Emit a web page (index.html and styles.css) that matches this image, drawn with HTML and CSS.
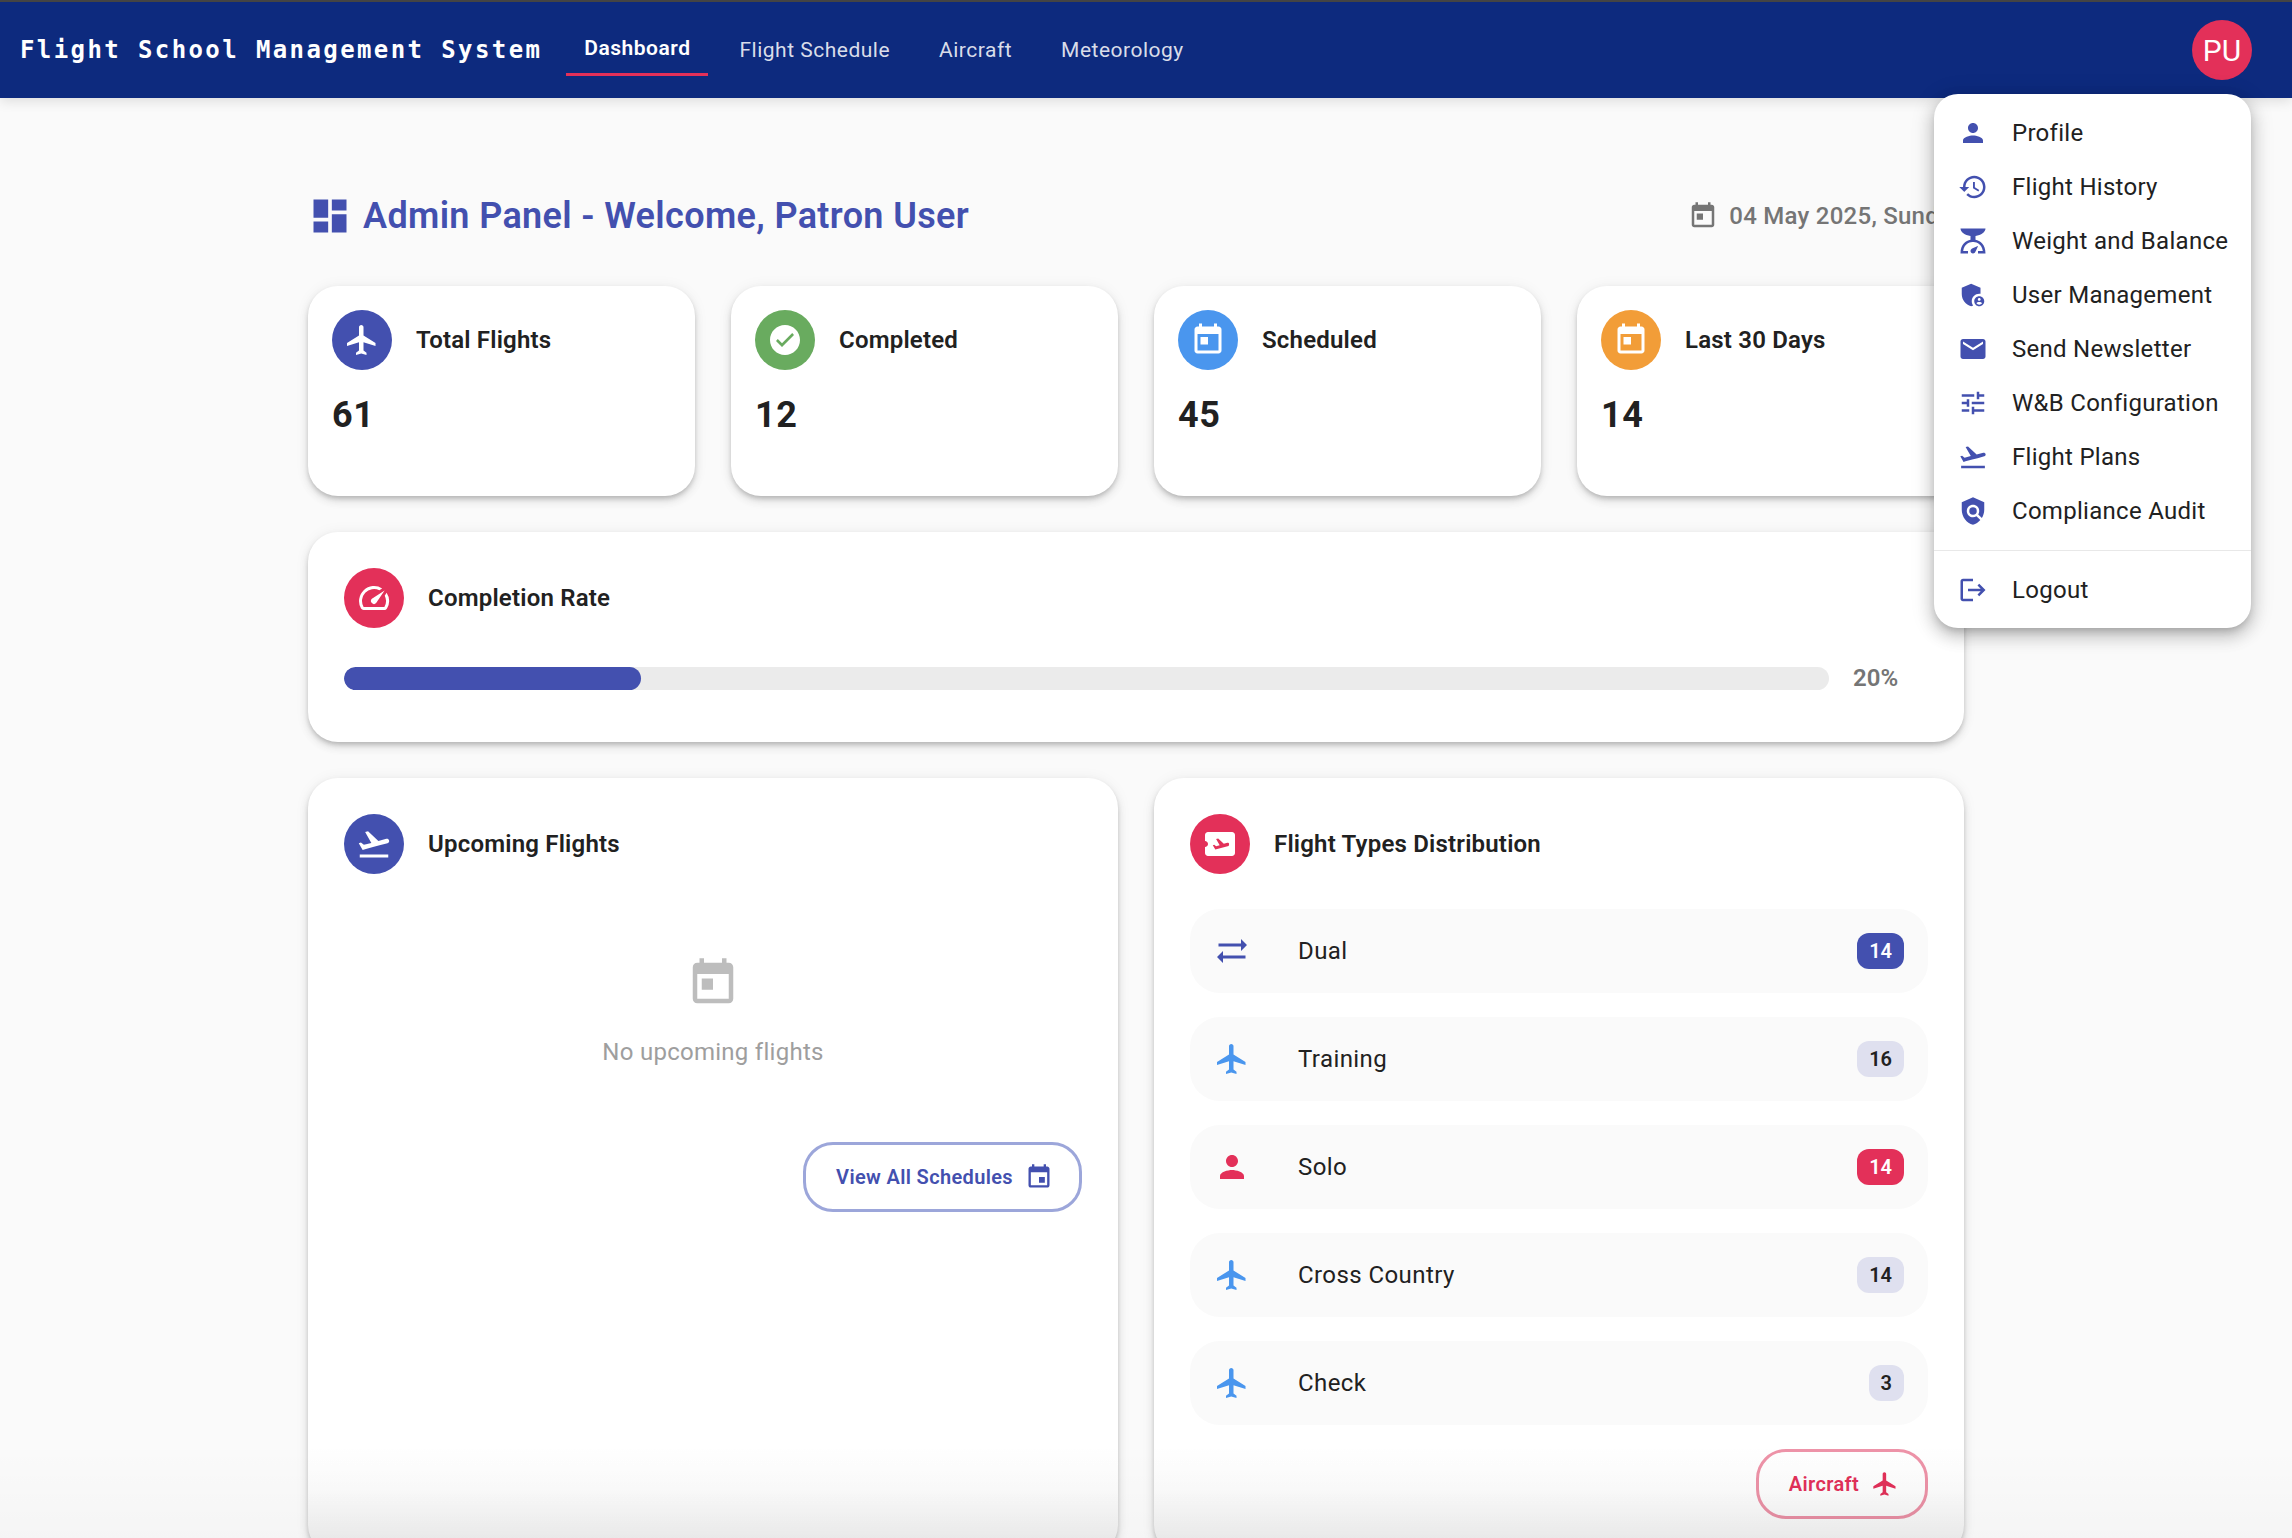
FILE: index.html
```html
<!DOCTYPE html>
<html lang="en">
<head>
<meta charset="utf-8">
<title>Flight School Management System</title>
<link rel="stylesheet" href="styles.css">
</head>
<body>
<svg class="defs" width="0" height="0" aria-hidden="true">
  <symbol id="i-person" viewBox="0 0 24 24"><path d="M12 12c2.21 0 4-1.79 4-4s-1.79-4-4-4-4 1.79-4 4 1.79 4 4 4zm0 2c-2.67 0-8 1.34-8 4v2h16v-2c0-2.66-5.33-4-8-4z"/></symbol>
  <symbol id="i-history" viewBox="0 0 24 24"><path d="M13 3c-4.97 0-9 4.03-9 9H1l3.89 3.89.07.14L9 12H6c0-3.87 3.13-7 7-7s7 3.13 7 7-3.13 7-7 7c-1.93 0-3.68-.79-4.94-2.06l-1.42 1.42C8.27 19.99 10.51 21 13 21c4.97 0 9-4.03 9-9s-4.03-9-9-9zm-1 5v5l4.28 2.54.72-1.21-3.5-2.08V8H12z"/></symbol>
  <symbol id="i-scale" viewBox="0 0 24 24"><path d="M14 11V8c4.56-.58 8-3.1 8-6H2c0 2.9 3.44 5.42 8 6v3c-3.68.73-8 3.61-8 11h6v-2H4.13c.93-6.83 6.65-7.2 7.87-7.2s6.94.37 7.87 7.2H16v2h6c0-7.39-4.32-10.27-8-11zm-2 11c-1.1 0-2-.9-2-2 0-.55.22-1.05.59-1.41C11.39 17.79 16 16 16 16s-1.79 4.61-2.59 5.41c-.36.37-.86.59-1.41.59z"/></symbol>
  <symbol id="i-admin" viewBox="0 0 24 24"><path d="M17 11c.34 0 .67.04 1 .09V6.27L10.5 3 3 6.27v4.91c0 4.54 3.2 8.79 7.5 9.82.55-.13 1.08-.32 1.6-.55-.69-.98-1.1-2.17-1.1-3.45 0-3.31 2.69-6 6-6z"/><path d="M17 13c-2.21 0-4 1.79-4 4s1.79 4 4 4 4-1.79 4-4-1.79-4-4-4zm0 1.38c.62 0 1.12.51 1.12 1.12s-.51 1.12-1.12 1.12-1.12-.51-1.12-1.12.5-1.12 1.12-1.12zm0 5.37c-.93 0-1.74-.46-2.24-1.17.05-.72 1.51-1.08 2.24-1.08s2.19.36 2.24 1.08c-.5.71-1.31 1.17-2.24 1.17z"/></symbol>
  <symbol id="i-email" viewBox="0 0 24 24"><path d="M20 4H4c-1.1 0-1.99.9-1.99 2L2 18c0 1.1.9 2 2 2h16c1.1 0 2-.9 2-2V6c0-1.1-.9-2-2-2zm0 4l-8 5-8-5V6l8 5 8-5v2z"/></symbol>
  <symbol id="i-tune" viewBox="0 0 24 24"><path d="M3 17v2h6v-2H3zM3 5v2h10V5H3zm10 16v-2h8v-2h-8v-2h-2v6h2zM7 9v2H3v2h4v2h2V9H7zm14 4v-2H11v2h10zm-6-4h2V7h4V5h-4V3h-2v6z"/></symbol>
  <symbol id="i-takeoff" viewBox="0 0 24 24"><path d="M2.5 19h19v2h-19zm19.57-9.36c-.21-.8-1.04-1.28-1.84-1.06L14.92 10l-6.9-6.43-1.93.51 4.14 7.17-4.97 1.33-1.97-1.54-1.45.39 1.82 3.16.77 1.33 1.6-.43 5.31-1.42 4.35-1.16L21 11.49c.81-.23 1.28-1.05 1.07-1.85z"/></symbol>
  <symbol id="i-policy" viewBox="0 0 24 24"><path d="M12 1 3 5v6c0 5.55 3.84 10.74 9 12 2.3-.56 4.33-1.9 5.88-3.71l-3.12-3.12c-1.94 1.29-4.58 1.07-6.29-.64-1.95-1.95-1.95-5.12 0-7.07 1.95-1.95 5.12-1.95 7.07 0 1.71 1.71 1.92 4.35.64 6.29l2.9 2.9C20.29 15.69 21 13.38 21 11V5l-9-4z"/><circle cx="12" cy="12" r="3"/></symbol>
  <symbol id="i-logout" viewBox="0 0 24 24"><path d="M17 7l-1.41 1.41L18.17 11H8v2h10.17l-2.58 2.58L17 17l5-5zM4 5h8V3H4c-1.1 0-2 .9-2 2v14c0 1.1.9 2 2 2h8v-2H4V5z"/></symbol>
  <symbol id="i-flight" viewBox="0 0 24 24"><path d="M21 16v-2l-8-5V3.5c0-.83-.67-1.5-1.5-1.5S10 2.67 10 3.5V9l-8 5v2l8-2.5V19l-2 1.5V22l3.5-1 3.5 1v-1.5L13 19v-5.5l8 2.5z"/></symbol>
  <symbol id="i-check" viewBox="0 0 24 24"><path fill-rule="evenodd" d="M12 2C6.48 2 2 6.48 2 12s4.48 10 10 10 10-4.48 10-10S17.52 2 12 2zm-2 14.6-4-4 1.2-1.2 2.8 2.8 6.8-6.8 1.2 1.2-8 8z"/></symbol>
  <symbol id="i-today" viewBox="0 0 24 24"><path d="M19 3h-1V1h-2v2H8V1H6v2H5c-1.11 0-1.99.9-1.99 2L3 19c0 1.1.89 2 2 2h14c1.1 0 2-.9 2-2V5c0-1.1-.9-2-2-2zm0 16H5V8h14v11zM7 10h5v5H7z"/></symbol>
  <symbol id="i-event" viewBox="0 0 24 24"><path d="M17 12h-5v5h5v-5zM16 1v2H8V1H6v2H5c-1.11 0-1.99.9-1.99 2L3 19c0 1.1.89 2 2 2h14c1.1 0 2-.9 2-2V5c0-1.1-.9-2-2-2h-1V1h-2zm3 18H5V8h14v11z"/></symbol>
  <symbol id="i-dashboard" viewBox="0 0 24 24"><path d="M3 13h8V3H3v10zm0 8h8v-6H3v6zm10 0h8V11h-8v10zm0-18v6h8V3h-8z"/></symbol>
  <symbol id="i-speed" viewBox="0 0 24 24"><path d="M20.38 8.57l-1.23 1.85a8 8 0 0 1-.22 7.58H5.07A8 8 0 0 1 15.58 6.85l1.85-1.23A10 10 0 0 0 3.35 19a2 2 0 0 0 1.72 1h13.85a2 2 0 0 0 1.74-1 10 10 0 0 0-.27-10.44zm-9.79 6.84a2 2 0 0 0 2.83 0l5.66-8.49-8.49 5.66a2 2 0 0 0 0 2.83z"/></symbol>
  <symbol id="i-ticket" viewBox="0 0 24 24"><path fill-rule="evenodd" d="M20 4H4c-1.1 0-1.99.9-1.99 2v4c1.1 0 1.99.9 1.99 2s-.89 2-2 2v4c0 1.1.9 2 2 2h16c1.1 0 2-.9 2-2V6c0-1.1-.9-2-2-2zm-2.27 9.3-8.86 2.36-1.66-2.88.93-.25 1.26.99 2.39-.64-2.4-4.16 1.4-.38 3.74 3.48 2.37-.63c.5-.13 1.02.16 1.15.67.14.5-.15 1.02-.32 1.44z"/></symbol>
  <symbol id="i-sync" viewBox="0 0 24 24"><path d="M22 8l-4-4v3H3v2h15v3l4-4zM2 16l4 4v-3h15v-2H6v-3l-4 4z"/></symbol>
</svg>

<header class="navbar">
  <span class="brand">Flight School Management System</span>
  <nav class="nav-links">
    <a class="nav-link active">Dashboard</a>
    <a class="nav-link">Flight Schedule</a>
    <a class="nav-link">Aircraft</a>
    <a class="nav-link">Meteorology</a>
  </nav>
  <div class="avatar">PU</div>
</header>

<ul class="menu">
  <li class="menu-item"><svg class="menu-icon"><use href="#i-person"/></svg>Profile</li>
  <li class="menu-item"><svg class="menu-icon"><use href="#i-history"/></svg>Flight History</li>
  <li class="menu-item"><svg class="menu-icon"><use href="#i-scale"/></svg>Weight and Balance</li>
  <li class="menu-item"><svg class="menu-icon"><use href="#i-admin"/></svg>User Management</li>
  <li class="menu-item"><svg class="menu-icon"><use href="#i-email"/></svg>Send Newsletter</li>
  <li class="menu-item"><svg class="menu-icon"><use href="#i-tune"/></svg>W&amp;B Configuration</li>
  <li class="menu-item"><svg class="menu-icon"><use href="#i-takeoff"/></svg>Flight Plans</li>
  <li class="menu-item"><svg class="menu-icon"><use href="#i-policy"/></svg>Compliance Audit</li>
  <li class="menu-divider"></li>
  <li class="menu-item"><svg class="menu-icon"><use href="#i-logout"/></svg>Logout</li>
</ul>

<main class="main">
  <div class="content">
    <div class="page-head">
      <h1 class="page-title"><svg class="page-title-icon"><use href="#i-dashboard"/></svg>Admin Panel - Welcome, Patron User</h1>
      <div class="page-date"><svg class="date-icon"><use href="#i-today"/></svg>04 May 2025, Sunday</div>
    </div>

    <section class="stats">
      <article class="card stat">
        <div class="card-head"><span class="disc indigo"><svg class="disc-icon"><use href="#i-flight"/></svg></span><h2 class="card-title">Total Flights</h2></div>
        <div class="stat-value">61</div>
      </article>
      <article class="card stat">
        <div class="card-head"><span class="disc green"><svg class="disc-icon"><use href="#i-check"/></svg></span><h2 class="card-title">Completed</h2></div>
        <div class="stat-value">12</div>
      </article>
      <article class="card stat">
        <div class="card-head"><span class="disc blue"><svg class="disc-icon"><use href="#i-today"/></svg></span><h2 class="card-title">Scheduled</h2></div>
        <div class="stat-value">45</div>
      </article>
      <article class="card stat">
        <div class="card-head"><span class="disc orange"><svg class="disc-icon"><use href="#i-today"/></svg></span><h2 class="card-title">Last 30 Days</h2></div>
        <div class="stat-value">14</div>
      </article>
    </section>

    <section class="card panel rate">
      <div class="card-head"><span class="disc crimson"><svg class="disc-icon"><use href="#i-speed"/></svg></span><h2 class="card-title">Completion Rate</h2></div>
      <div class="progress-row">
        <div class="track"><div class="fill" style="width:20%"></div></div>
        <span class="progress-label">20%</span>
      </div>
    </section>

    <section class="columns">
      <article class="card panel faded">
        <div class="card-head"><span class="disc indigo"><svg class="disc-icon"><use href="#i-takeoff"/></svg></span><h2 class="card-title">Upcoming Flights</h2></div>
        <div class="empty">
          <svg class="empty-icon"><use href="#i-today"/></svg>
          <p class="empty-text">No upcoming flights</p>
        </div>
        <div class="actions"><a class="btn btn-indigo">View All Schedules<svg class="btn-icon"><use href="#i-event"/></svg></a></div>
      </article>
      <article class="card panel faded">
        <div class="card-head"><span class="disc crimson"><svg class="disc-icon"><use href="#i-ticket"/></svg></span><h2 class="card-title">Flight Types Distribution</h2></div>
        <ul class="types">
          <li class="type"><svg class="type-icon c-indigo"><use href="#i-sync"/></svg><span class="type-name">Dual</span><span class="badge badge-indigo">14</span></li>
          <li class="type"><svg class="type-icon c-blue"><use href="#i-flight"/></svg><span class="type-name">Training</span><span class="badge">16</span></li>
          <li class="type"><svg class="type-icon c-crimson"><use href="#i-person"/></svg><span class="type-name">Solo</span><span class="badge badge-crimson">14</span></li>
          <li class="type"><svg class="type-icon c-blue"><use href="#i-flight"/></svg><span class="type-name">Cross Country</span><span class="badge">14</span></li>
          <li class="type"><svg class="type-icon c-blue"><use href="#i-flight"/></svg><span class="type-name">Check</span><span class="badge">3</span></li>
        </ul>
        <div class="actions actions-tight"><a class="btn btn-crimson">Aircraft<svg class="btn-icon"><use href="#i-flight"/></svg></a></div>
      </article>
    </section>
  </div>
</main>
<div class="bottom-fade"></div>
</body>
</html>
```
FILE: styles.css
```css
* { box-sizing: border-box; }
html, body { margin: 0; padding: 0; height: 1538px; overflow: hidden; }
body { background: #fafafa; color: #212121; font-family: Roboto, "Liberation Sans", sans-serif; position: relative; }
svg { fill: currentColor; display: block; flex: none; }
.defs { position: absolute; }

.navbar { display: flex; align-items: center; height: 98px; padding: 0 40px 0 20px; background: #0d2a7e; border-top: 2px solid #444; box-shadow: 0 3px 12px rgba(0,0,0,.12); position: relative; z-index: 2; }
.brand { font-family: "DejaVu Sans Mono", monospace; font-weight: 700; font-size: 24px; letter-spacing: 2.4px; color: #fff; white-space: nowrap; margin-right: 24px; }
.nav-links { display: flex; gap: 13px; }
.nav-link { display: flex; align-items: center; height: 56px; padding: 3px 18px 0; font-size: 21px; letter-spacing: .5px; color: rgba(255,255,255,.85); white-space: nowrap; }
.nav-link.active { height: 56px; margin-bottom: 4px; padding-top: 3px; border-bottom: 3px solid #e33059; color: #fff; font-weight: 600; }
.avatar { margin-left: auto; width: 60px; height: 60px; border-radius: 50%; background: #e33059; color: #fff; font-size: 30px; display: flex; align-items: center; justify-content: center; }

.menu { list-style: none; margin: 0; padding: 12px 0 11px; position: absolute; z-index: 3; top: 94px; left: 1934px; width: 317px; background: #fff; border-radius: 24px; box-shadow: 0 5px 8px -3px rgba(0,0,0,.2), 0 8px 16px 2px rgba(0,0,0,.14), 0 3px 22px 3px rgba(0,0,0,.12); }
.menu-item { display: flex; align-items: center; height: 54px; padding-left: 24px; font-size: 24px; letter-spacing: .28px; color: #212121; white-space: nowrap; }
.menu-icon { width: 30px; height: 30px; margin-right: 24px; color: #4350af; }
.menu-divider { height: 1px; background: #e8e8e8; margin: 12px 0; }

.main { padding: 0 20px 0 0; }
.content { width: 1656px; margin: 0 auto; padding-top: 96px; }
.page-head { display: flex; justify-content: space-between; align-items: center; height: 44px; margin-bottom: 48px; }
.page-title { display: flex; align-items: center; margin: 0; font-size: 36px; font-weight: 600; letter-spacing: .36px; color: #4350af; white-space: nowrap; }
.page-title-icon { width: 44px; height: 44px; margin-right: 11px; }
.page-date { display: flex; align-items: center; font-size: 24px; font-weight: 500; letter-spacing: .25px; color: #757575; white-space: nowrap; }
.date-icon { width: 30px; height: 30px; margin-right: 11px; }

.card { background: #fff; border-radius: 30px; box-shadow: 0 3px 5px -1px rgba(0,0,0,.2), 0 5px 10px rgba(0,0,0,.1), 0 1px 15px rgba(0,0,0,.06); }
.stats { display: grid; grid-template-columns: repeat(4, 1fr); gap: 36px; margin-bottom: 36px; }
.stat { height: 210px; padding: 24px; }
.panel { padding: 36px; }
.rate { height: 210px; margin-bottom: 36px; }
.card-head { display: flex; align-items: center; gap: 24px; }
.card-title { margin: 0; font-size: 24px; font-weight: 600; letter-spacing: .2px; color: #212121; white-space: nowrap; }
.disc { width: 60px; height: 60px; border-radius: 50%; display: flex; align-items: center; justify-content: center; color: #fff; flex: none; }
.disc-icon { width: 36px; height: 36px; }
.indigo { background: #4350af; }
.green { background: #69ab5f; }
.blue { background: #4a96ee; }
.orange { background: #f29d38; }
.crimson { background: #e33059; }
.stat-value { margin-top: 24px; font-size: 36px; font-weight: 700; letter-spacing: .5px; line-height: 43px; color: #212121; }

.progress-row { display: flex; align-items: center; gap: 24px; margin-top: 36px; }
.track { flex: 1; height: 23px; border-radius: 12px; background: #ebebeb; overflow: hidden; }
.fill { height: 100%; border-radius: 12px; background: #4350af; }
.progress-label { width: 75px; font-size: 24px; font-weight: 600; color: #757575; }

.columns { display: grid; grid-template-columns: 1fr 1fr; gap: 36px; }
.faded { position: relative; }
.faded::after { content: ""; position: absolute; left: 0; right: 0; bottom: 0; height: 112px; border-radius: 0 0 30px 30px; background: linear-gradient(to bottom, rgba(0,0,0,0), rgba(0,0,0,.015) 40%, rgba(0,0,0,.085)); pointer-events: none; }
.empty { display: flex; flex-direction: column; align-items: center; margin-top: 82px; }
.empty-icon { width: 54px; height: 54px; color: #bdbdbd; }
.empty-text { margin: 24px 0 0; font-size: 24px; letter-spacing: .27px; line-height: 36px; color: #9e9e9e; }
.actions { display: flex; justify-content: flex-end; margin-top: 72px; }
.actions-tight { margin-top: 24px; }
.btn { display: flex; align-items: center; gap: 12px; height: 70px; padding: 0 26px 0 30px; border: 3px solid; border-radius: 30px; font-size: 20px; font-weight: 600; letter-spacing: .35px; white-space: nowrap; }
.btn-icon { width: 28px; height: 28px; }
.btn-indigo { color: #4350af; border-color: #9ca6da; }
.btn-crimson { color: #e33059; border-color: #ee93a8; }

.types { list-style: none; margin: 35px 0 0; padding: 0; display: flex; flex-direction: column; gap: 24px; }
.type { display: flex; align-items: center; height: 84px; padding: 0 24px; border-radius: 30px; background: #fafafa; }
.type-icon { width: 36px; height: 36px; margin-right: 48px; }
.c-indigo { color: #4350af; }
.c-blue { color: #4a96ee; }
.c-crimson { color: #e33059; }
.type-name { flex: 1; font-size: 24px; font-weight: 400; letter-spacing: .42px; color: #212121; }
.badge { height: 36px; padding: 0 12px; border-radius: 12px; background: #dfe0ef; color: #212121; font-size: 20px; font-weight: 600; display: flex; align-items: center; }
.badge-indigo { background: #4350af; color: #fff; }
.badge-crimson { background: #e33059; color: #fff; }

.bottom-fade { position: absolute; left: 0; right: 0; top: 1448px; height: 90px; background: linear-gradient(to bottom, rgba(0,0,0,0), rgba(0,0,0,.02)); pointer-events: none; z-index: 1; }
```
